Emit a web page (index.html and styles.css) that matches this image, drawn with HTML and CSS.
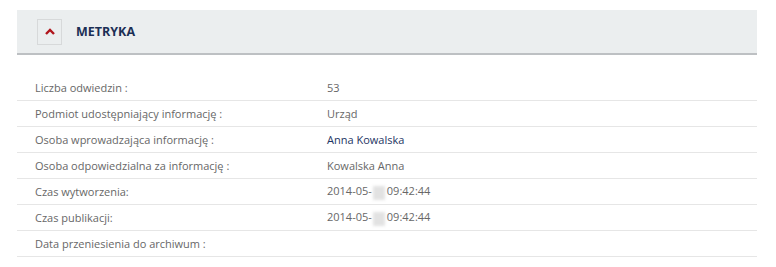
FILE: index.html
```html
<!DOCTYPE html>
<html lang="pl">
<head>
<meta charset="utf-8">
<link rel="stylesheet" href="styles.css">
</head>
<body>
<section class="panel">
  <header class="panel-head">
    <button class="toggle" type="button" aria-label="Zwiń">
      <svg width="10" height="7" viewBox="0 0 10 7"><path d="M1 6 L5 2 L9 6" fill="none" stroke="#b0151c" stroke-width="2.4"/></svg>
    </button>
    <h2 class="title">METRYKA</h2>
  </header>
  <div class="meta">
    <div class="row"><span class="label">Liczba odwiedzin :</span><span class="value">53</span></div>
    <div class="row"><span class="label">Podmiot udostępniający informację :</span><span class="value">Urząd</span></div>
    <div class="row"><span class="label">Osoba wprowadzająca informację :</span><span class="value link">Anna Kowalska</span></div>
    <div class="row"><span class="label">Osoba odpowiedzialna za informację :</span><span class="value">Kowalska Anna</span></div>
    <div class="row"><span class="label">Czas wytworzenia:</span><span class="value">2014-05-<span class="blur"></span>09:42:44</span></div>
    <div class="row"><span class="label">Czas publikacji:</span><span class="value">2014-05-<span class="blur"></span>09:42:44</span></div>
    <div class="row"><span class="label">Data przeniesienia do archiwum :</span><span class="value"></span></div>
  </div>
</section>
</body>
</html>
```

FILE: styles.css
```css
html, body {
  margin: 0;
  padding: 0;
  background: #fff;
}
body {
  padding: 10px 19px 0 17px;
  font-family: "Open Sans", "Liberation Sans", sans-serif;
}
.panel-head {
  display: flex;
  align-items: center;
  height: 43px;
  background: #ebeeef;
  border-bottom: 2px solid #bdc0c3;
  padding-left: 20px;
}
.toggle {
  width: 25px;
  height: 26px;
  margin: 0;
  padding: 0;
  border: 1px solid #d7d9da;
  background: transparent;
  display: flex;
  align-items: center;
  justify-content: center;
}
.toggle svg { display: block; margin-top: -1px; }
.title {
  margin: 0 0 0 14px;
  font-size: 12.5px;
  font-weight: 700;
  color: #1b2f55;
  letter-spacing: 0;
}
.meta {
  margin-top: 20px;
}
.row {
  display: flex;
  height: 25px;
  align-items: center;
  border-bottom: 1px solid #e6e6e6;
  font-size: 11px;
  color: #676767;
}
.label {
  box-sizing: border-box;
  width: 292px;
  padding-left: 18px;
  flex: none;
}
.value {
  padding-left: 18px;
}
.link { color: #1d3563; }
.blur {
  display: inline-block;
  width: 12px;
  height: 14px;
  margin: 0 2px 0 1px;
  background: #e2e2e2;
  filter: blur(1.5px);
  vertical-align: middle;
}
```
